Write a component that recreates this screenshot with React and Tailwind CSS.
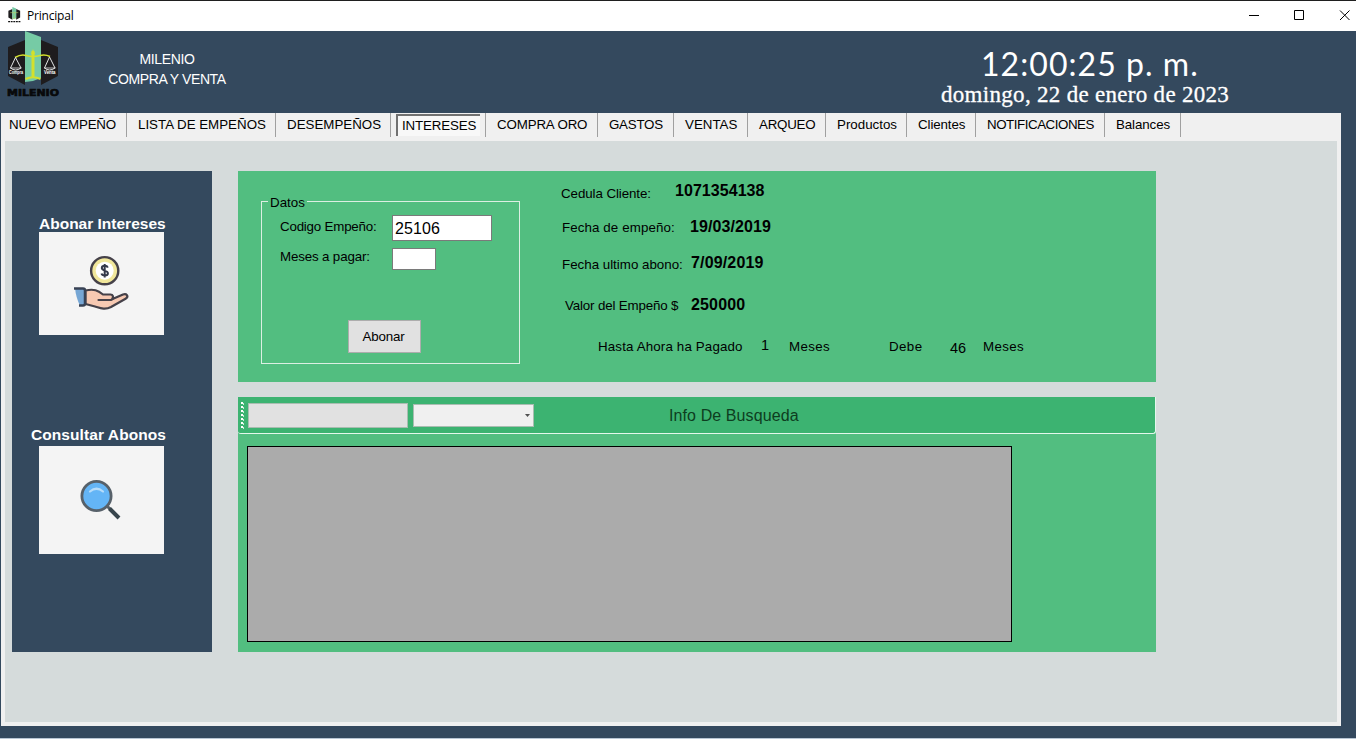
import React from "react";

const tabs = [
  ["NUEVO EMPEÑO", "w-[126px] pl-[8px] tracking-[-0.15px]"],
  ["LISTA DE EMPEÑOS", "w-[149px] pl-[11px]"],
  ["DESEMPEÑOS", "w-[115px] pl-[11px]"],
  ["INTERESES", ""],
  ["COMPRA ORO", "w-[112px] pl-[11px] tracking-[-0.15px]"],
  ["GASTOS", "w-[76px] pl-[11px] tracking-[-0.25px]"],
  ["VENTAS", "w-[74px] pl-[11px]"],
  ["ARQUEO", "w-[78px] pl-[11px] tracking-[-0.25px]"],
  ["Productos", "w-[81px] pl-[11px]"],
  ["Clientes", "w-[69px] pl-[11px] tracking-[-0.1px]"],
  ["NOTIFICACIONES", "w-[129px] pl-[11px] tracking-[-0.45px]"],
  ["Balances", "w-[76px] pl-[11px] tracking-[-0.1px]"],
];

function Emblem() {
  return (
    <>
      <path d="M1 16 L18 9 V54 L1 45Z M51 16 L34 9 V54 L51 45Z" fill="#1e1c1e" />
      <path d="M18 0 L34 6 V47 L26 50 L18 51Z" fill="#76cba5" />
    </>
  );
}

function Logo() {
  return (
    <svg className="block h-[68px] w-[54px]" viewBox="0 0 54 68">
      <Emblem />
      <g fill="none" stroke="#d3e02c" strokeWidth="1.5">
        <path d="M8 26.500 Q14 23 19 24.500 Q26 26.500 33 24.500 Q38 23 43 25.500" />
        <path d="M26 20 V46" strokeWidth="3" />
        <path d="M18.500 48 Q26 44.500 33.500 48" strokeWidth="2" />
      </g>
      <path d="M26 18 L28 23 H24Z" fill="#d3e02c" />
      <g fill="none" stroke="#e4e6e6" strokeWidth="1">
        <path d="M8.500 26.500 L3.500 37 Q8.500 41 14 37 M8.500 26.500 L14 37" />
        <path d="M42.500 26 L37.500 37 Q42.500 41 48 37 M42.500 26 L48 37" />
        <path d="M3 37 H14.500 M37 37 H48.500" strokeWidth=".8" />
      </g>
      <g fill="#fff" fontFamily="Liberation Sans" fontWeight="700" fontSize="4.500">
        <text x="2" y="42.500" textLength="14" lengthAdjust="spacingAndGlyphs">Compra</text>
        <text x="37" y="42.500" textLength="11.500" lengthAdjust="spacingAndGlyphs">Venta</text>
      </g>
      <text x="0" y="64.500" fill="#08090b" stroke="#08090b" strokeWidth=".7" fontFamily="DejaVu Sans" fontWeight="700" fontSize="9.300" textLength="52" lengthAdjust="spacingAndGlyphs">MILENIO</text>
    </svg>
  );
}

function AppIcon() {
  return (
    <svg className="block h-[16px] w-[13px]" viewBox="0 0 54 68">
      <Emblem />
      <path d="M9 24 H43 M26 20 V48 M18 48 H34" stroke="#b5cf6a" strokeWidth="2.500" fill="none" />
      <path d="M0 62 H52" stroke="#111" strokeWidth="5" strokeDasharray="8 3" />
    </svg>
  );
}

function PayIcon() {
  return (
    <svg className="ml-[34px] mt-[22px] block h-[58px] w-[58px]" viewBox="0 0 58 58">
      <circle cx="31.700" cy="16.700" r="13.600" fill="#f1e79b" stroke="#454149" strokeWidth="2.400" />
      <circle cx="31.700" cy="16.700" r="9" fill="#fff" />
      <path d="M34.800 13.600 C34.300 12.200 33.200 11.800 31.800 11.800 C30 11.800 28.800 12.600 28.800 14.100 C28.800 17.300 34.900 15.900 34.900 19.300 C34.900 20.800 33.600 21.600 31.800 21.600 C30.100 21.600 28.900 21 28.500 19.600 M31.700 10 V23.400" fill="none" stroke="#34394a" strokeWidth="2" />
      <path d="M2 34 H12 V51.500 H7 Q3 44 2 34Z" fill="#76a6d4" />
      <path d="M12.500 36.500 C21 34.500 25 36.500 30 40.500 H37.500 C40 40.700 40.500 42.500 39.500 45 L50 40.500 C53.500 39.200 56 42 53 44.500 L38 53 C32 56.200 27 54 22 52.500 L12.500 50Z" fill="#f7c9b2" stroke="#454149" strokeWidth="2.200" strokeLinejoin="round" />
      <path d="M25.500 46 H38 Q40.500 45 40 43" fill="none" stroke="#454149" strokeWidth="2.200" strokeLinecap="round" />
      <path d="M1 34.500 H10 Q12 34.500 12 36.500 V49.500 Q12 51.500 10 51.500 H6" fill="none" stroke="#384254" strokeWidth="2.500" />
    </svg>
  );
}

function SearchIcon() {
  return (
    <svg className="ml-[41px] mt-[33px] block h-[42px] w-[42px]" viewBox="0 0 42 42">
      <path d="M27 27 L33 33" stroke="#566068" strokeWidth="3" />
      <path d="M29.500 29.500 L39 39" stroke="#37454c" strokeWidth="4" />
      <circle cx="16.500" cy="17" r="14.600" fill="#64b5f6" stroke="#57616a" strokeWidth="2.800" />
      <path d="M10 12.500 Q16.500 7 23 12.500" fill="none" stroke="#b6dcfa" strokeWidth="2.200" strokeLinecap="round" />
    </svg>
  );
}

function TitleBar() {
  return (
    <div className="flex h-[31px] items-start border-t border-[#1f1f1f] bg-white">
      <div className="ml-[8px] mt-[6px]"><AppIcon /></div>
      <span className="ml-[6px] mt-[6px] font-['Open_Sans',sans-serif] text-[12px] leading-[18px] tracking-[-0.2px]">Principal</span>
      <svg className="ml-auto mt-[8px] block h-[12px] w-[108px]" viewBox="0 0 108 12" fill="none" stroke="#000" strokeWidth="1">
        <path d="M1 6.500 H11" />
        <path d="M46.500 1.500 H55.500 V10.500 H46.500Z" />
        <path d="M92 1.500 L101.500 11 M101.500 1.500 L92 11" />
      </svg>
    </div>
  );
}

function Header() {
  return (
    <header className="flex h-[82px] text-white">
      <div className="ml-[7px] w-[54px]"><Logo /></div>
      <div className="ml-[46px] mt-[18px] w-[120px] whitespace-nowrap text-center text-[14px] leading-[20px] tracking-[-0.4px]">
        <div>MILENIO</div>
        <div>COMPRA Y VENTA</div>
      </div>
      <div className="ml-[714px] whitespace-nowrap">
        <div className="ml-[40px] mt-[12px] font-[Lato,sans-serif] text-[32px] leading-[42px] tracking-[1.05px]">12:00:25 p. m.</div>
        <div className="font-['Liberation_Serif',serif] text-[23px] leading-[20px] tracking-[0.3px] [-webkit-text-stroke:0.3px_white]">domingo, 22 de enero de 2023</div>
      </div>
    </header>
  );
}

function TabStrip() {
  return (
    <nav className="flex h-[28px] whitespace-nowrap text-[13.33px] leading-[24px]">
      {tabs.map(([name, size]) =>
        name === "INTERESES" ? (
          <div key={name} className="h-[24px] w-[95px] border-r border-[#a0a0a0] pl-[5px] pt-[1px]">
            <div className="h-[22px] w-[84px] border-l-2 border-t-2 border-[#717171] bg-[#f8f8f8] pl-[4px] leading-[20px] tracking-[-0.15px]">{name}</div>
          </div>
        ) : (
          <div key={name} className={"h-[24px] border-r border-[#a0a0a0] " + size}>{name}</div>
        )
      )}
    </nav>
  );
}

function Sidebar() {
  return (
    <aside className="h-[481px] w-[200px] bg-[#34495e] text-[15.5px] font-bold leading-[18px] text-white">
      <div className="ml-[27px] mt-[43px] whitespace-nowrap pt-[1px] leading-[17px]">Abonar Intereses</div>
      <div className="ml-[27px] flow-root h-[103px] w-[125px] bg-[#f4f4f4]"><PayIcon /></div>
      <div className="ml-[19px] mt-[91px] whitespace-nowrap tracking-[0.08px]">Consultar Abonos</div>
      <div className="ml-[27px] mt-[2px] flow-root h-[108px] w-[125px] bg-[#f4f4f4]"><SearchIcon /></div>
    </aside>
  );
}

function PaymentForm() {
  return (
    <fieldset className="ml-[23px] mt-[22px] h-[171px] w-[259px] border border-[#dcefe3]">
      <legend className="ml-[6px] h-[17px] px-[2px] pt-[1px] leading-[17px]">Datos</legend>
      <div className="mt-[5px] flex pl-[18px]">
        <label className="mt-[4px] w-[112px] tracking-[-0.2px]">Codigo Empeño:</label>
        <div className="h-[26px] w-[100px] border border-[#7a7a7a] bg-white pl-[2px] text-[16px] leading-[25px] tracking-[0.1px]">25106</div>
      </div>
      <div className="mt-[7px] flex pl-[18px]">
        <label className="mt-[1px] w-[112px] tracking-[-0.15px]">Meses a pagar:</label>
        <div className="h-[22px] w-[44px] border border-[#7a7a7a] bg-white" />
      </div>
      <button className="ml-[86px] mt-[50px] block h-[33px] w-[73px] border border-[#adadad] bg-[#e1e1e1] pr-[2px] pt-[1px] tracking-[-0.15px]">Abonar</button>
    </fieldset>
  );
}

function Details() {
  return (
    <div className="ml-[41px] whitespace-nowrap">
      <div className="mt-[12px] flex h-[36px]">
        <span className="mt-[3px] w-[114px] tracking-[-0.08px]">Cedula Cliente:</span>
        <b className="text-[16px] tracking-[0.05px]">1071354138</b>
      </div>
      <div className="flex h-[36px] pl-px">
        <span className="mt-[1px] w-[128px] tracking-[0.1px]">Fecha de empeño:</span>
        <b className="text-[16px] tracking-[0.1px]">19/03/2019</b>
      </div>
      <div className="flex h-[42px] pl-px">
        <span className="mt-[2px] w-[129px]">Fecha ultimo abono:</span>
        <b className="text-[16px] tracking-[0.15px]">7/09/2019</b>
      </div>
      <div className="flex h-[41px] pl-[4px]">
        <span className="mt-[1px] w-[126px] tracking-[-0.15px]">Valor del Empeño $</span>
        <b className="text-[16px] tracking-[0.15px]">250000</b>
      </div>
      <div className="flex pl-[37px]">
        <span className="mt-[1px] w-[163px] tracking-[0.15px]">Hasta Ahora ha Pagado</span>
        <span className="-mt-px w-[28px] text-[14.500px]">1</span>
        <span className="mt-[1px] w-[100px] tracking-[0.35px]">Meses</span>
        <span className="mt-[1px] w-[61px] tracking-[0.4px]">Debe</span>
        <span className="mt-[2px] w-[33px] text-[14.500px]">46</span>
        <span className="mt-[1px] tracking-[0.35px]">Meses</span>
      </div>
    </div>
  );
}

function SearchPanel() {
  return (
    <section className="mt-[15px] h-[255px] bg-[#52be80]">
      <div className="flex h-[37px] rounded-b-[3px] border-b border-r border-[#e4f7ec] bg-[#3cb371]">
        <svg className="ml-[3px] mt-[5px] block h-[28px] w-[4px]" viewBox="0 0 4 28">
          <path d="M1 0 V27" stroke="#fff" strokeWidth="2" strokeDasharray="2 2" />
          <path d="M2.500 1 V28" stroke="#c9ecd8" strokeWidth="1" strokeDasharray="2 2" />
        </svg>
        <div className="ml-[3px] mt-[6px] h-[25px] w-[160px] border border-[#a9bdb1] bg-[#e1e1e1]" />
        <div className="ml-[5px] mt-[7px] flex h-[23px] w-[121px] items-center justify-end border border-[#a9bdb1] bg-[#f0f0f0] pr-[3px]">
          <svg className="h-[3px] w-[5px]" viewBox="0 0 5 3"><path d="M0 0 H5 L2.500 3Z" fill="#505050" /></svg>
        </div>
        <span className="ml-[135px] mt-[9px] text-[16px] leading-[19px] tracking-[0.1px] text-[#0d3d20]">Info De Busqueda</span>
      </div>
      <div className="ml-[9px] mt-[12px] h-[196px] w-[765px] border border-black bg-[#ababab]" />
    </section>
  );
}

export default function App() {
  return (
    <div className="h-[739px] w-[1356px] overflow-hidden border-b border-[#b8c6d4] bg-[#34495e] font-['Liberation_Sans',Arial,sans-serif] text-black">
      <TitleBar />
      <Header />
      <main className="ml-px h-[613px] w-[1340px] bg-[#f0f0f0]">
        <TabStrip />
        <div className="ml-[4px] flex h-[581px] w-[1332px] bg-[#d5dbdb] pl-[7px] pt-[30px]">
          <Sidebar />
          <div className="ml-[26px] w-[918px] text-[13.33px] leading-[16px]">
            <section className="flex h-[211px] bg-[#52be80]">
              <PaymentForm />
              <Details />
            </section>
            <SearchPanel />
          </div>
        </div>
      </main>
    </div>
  );
}
